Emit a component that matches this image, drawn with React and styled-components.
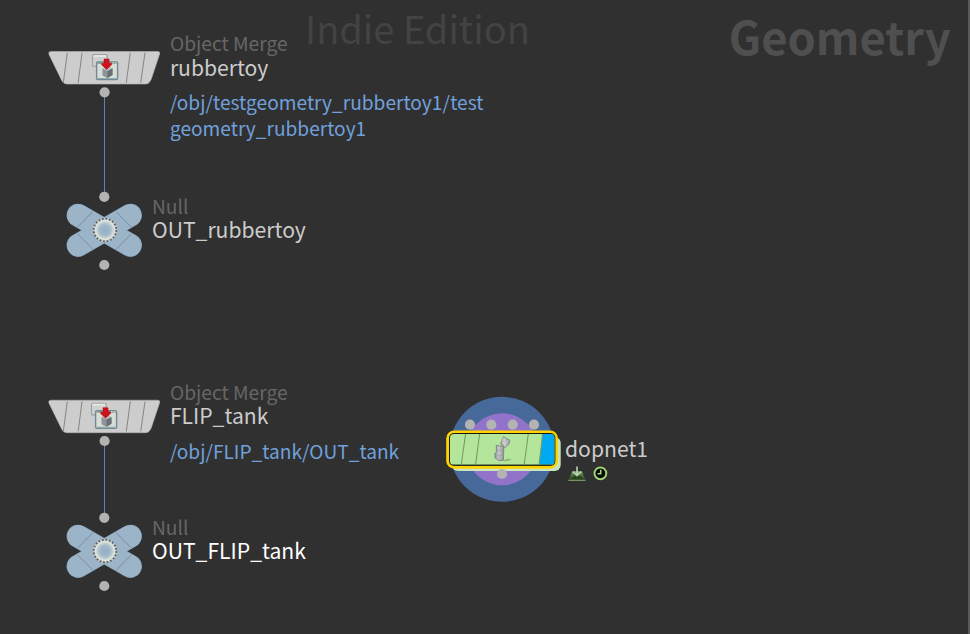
import React from 'react';
import styled, { createGlobalStyle } from 'styled-components';

const GlobalStyle = createGlobalStyle`
  body {
    margin: 0;
    background: #303030;
    font-family: "Noto Sans CJK SC", "Noto Sans", sans-serif;
  }
`;

const Canvas = styled.main`
  position: relative;
  box-sizing: border-box;
  width: 970px;
  height: 634px;
  overflow: hidden;
  background: #303030;
  border-right: 2px solid #5a5a5a;
`;

const Watermark = styled.div`
  position: absolute;
  left: ${(p) => p.$x}px;
  top: ${(p) => p.$y}px;
  color: ${(p) => p.$color};
  font-size: ${(p) => p.$size}px;
  font-weight: ${(p) => (p.$bold ? 700 : 400)};
  line-height: 50px;
  white-space: nowrap;
`;

const Node = styled.section`
  position: absolute;
  left: ${(p) => p.$x}px;
  top: ${(p) => p.$y}px;
  display: flex;
  align-items: flex-start;
`;

const Glyph = styled.svg`
  display: block;
  flex: none;
  overflow: visible;
`;

const Label = styled.div`
  display: flex;
  flex-direction: column;
  margin-top: ${(p) => p.$top || 0}px;
  margin-left: ${(p) => p.$gap}px;
  white-space: nowrap;
`;

const TypeName = styled.span`
  color: #666;
  font-size: 19.2px;
  line-height: 24px;
`;

const NodeName = styled.span`
  margin: ${(p) => (p.$tight ? '-1px 0 1px' : '0')};
  color: ${(p) => (p.$bright ? '#fff' : '#ccc')};
  font-size: 21.15px;
  line-height: 24px;
`;

const PathText = styled.span`
  margin-top: 10px;
  color: #71a0dc;
  font-size: 19.14px;
  line-height: 26px;
  white-space: pre-line;
`;

const Badges = styled.div`
  display: flex;
  gap: 6.5px;
  margin: 6px 0 0 3px;
`;

const WireSvg = styled.svg`
  position: absolute;
  left: 104px;
  top: ${(p) => p.$y}px;
`;

function Wire({ y, length }) {
  return (
    <WireSvg $y={y} width="1" height={length}>
      <rect width="1" height={length} fill="#5585c4" />
    </WireSvg>
  );
}

function Port({ x, y }) {
  return <circle cx={x} cy={y} r="5.1" fill="#b3b3b3" />;
}

function MergeIcon() {
  return (
    <g>
      <rect x="48.5" y="6.6" width="14.6" height="11.6" rx="1" fill="#cfd1cd" stroke="#999fa3" strokeWidth="1.1" />
      <path d="M49.5 8h12.6" stroke="#e9eae6" strokeWidth="1.8" />
      <rect x="52.6" y="13.9" width="21" height="17.6" rx="1.2" fill="#d6ded6" stroke="#70889a" strokeWidth="1.4" />
      <path d="M53.4 15h19.4" stroke="#83998f" strokeWidth="1.8" />
      <path d="M68 15h1.5m1.3 0h1.5" stroke="#d5e5d2" strokeWidth="1" />
      <path d="M54 30.5h18.500" stroke="#8eaca5" strokeWidth="1" />
      <path d="M58.500 20.500l5-2.200 5 2.200v6.500l-5.200 3-4.800-2.500z" fill="#8d9497" />
      <path d="M58.500 20.500l5-2.200 5 2.200-5 2.400z" fill="#bbc2c2" />
      <path d="M63.500 22.900l5-2.400v6.500l-5 3z" fill="#686f73" />
      <path d="M60 11h5l.3 4.400 2.500-.1-.2 1.400-5 4.800-5-4.800.1-1.300 2.300.1z" fill="#cc151b" stroke="#b30b14" strokeWidth=".5" />
    </g>
  );
}

function MergeGlyph({ shift = 0, iconX = 0 }) {
  return (
    <Glyph width="116" height="50" viewBox="0 0 116 50">
      <g transform={`translate(0 ${shift})`}>
        <path
          d="M7 3.500H113.800q2.500 0 1.800 2.600L107.300 31q-2 5-5.300 5H22.800q-3.300 0-5.200-3.800L5 6.500Q4 3.500 7 3.500z"
          fill="#cdcdcd"
          stroke="#b5b5b5"
          strokeWidth=".6"
        />
        <path d="M23.300 4.800l-4 30M38 4.800l-3.800 30M86.300 4.800l-4 30M101 4.800l-4.300 30" stroke="#858585" strokeWidth="1" />
        <g transform={`translate(${iconX} 0)`}>
          <MergeIcon />
        </g>
        <Port x={60.6} y={44.3} />
      </g>
    </Glyph>
  );
}

function NullGlyph() {
  return (
    <Glyph width="80" height="82" viewBox="0 0 80 82">
      <defs>
        <radialGradient id="hub">
          <stop offset="0" stopColor="#94aec5" />
          <stop offset=".48" stopColor="#a0b8ca" />
          <stop offset=".72" stopColor="#c5d1d3" />
          <stop offset=".85" stopColor="#e2e5dc" />
          <stop offset="1" stopColor="#cfd5d0" />
        </radialGradient>
      </defs>
      <g strokeLinecap="round">
        <path d="M14.200 25.300l52.100 30M66.300 25.300L14.200 55.300" stroke="#86a3bc" strokeWidth="23.200" />
        <path d="M14.200 25.300l52.100 30M66.300 25.300L14.200 55.300" stroke="#9cb4c8" strokeWidth="22" />
      </g>
      <path d="M28.700 21.700l-15 15.300M52 21.700l15 15M13.700 44l15 15M67.300 44L51.700 59.700" stroke="#70889c" strokeWidth=".9" />
      <circle cx="41" cy="40" r="11" fill="url(#hub)" />
      <circle cx="41" cy="40" r="11.200" fill="none" stroke="#c9cfc9" strokeWidth="1.500" />
      <circle cx="41" cy="40" r="11.300" fill="none" stroke="#5b6165" strokeWidth="1.800" strokeDasharray="1.850 1.700" />
      <Port x={40.3} y={6.8} />
      <Port x={40.3} y={75} />
    </Glyph>
  );
}

function DopGlyph() {
  return (
    <Glyph width="118" height="110" viewBox="444 395 118 110">
      <defs>
        <linearGradient id="metal" x1="0" x2="1">
          <stop offset="0" stopColor="#8f9394" />
          <stop offset=".45" stopColor="#c9cccd" />
          <stop offset="1" stopColor="#8c9092" />
        </linearGradient>
      </defs>
      <circle cx="502" cy="449.300" r="52.500" fill="#466999" />
      <circle cx="502" cy="449.300" r="36" fill="#9273ca" />
      <rect x="452" y="437" width="108.700" height="34" rx="6" fill="#cdeec1" opacity=".95" />
      <Port x={470} y={424.7} />
      <Port x={491.3} y={424.7} />
      <Port x={512.7} y={424.7} />
      <Port x={534} y={424.7} />
      <rect x="446.200" y="430.400" width="111.800" height="38.300" rx="8" fill="#ffd200" />
      <rect x="449" y="433" width="106.400" height="33" rx="5" fill="#17190c" />
      <rect x="450" y="434" width="104.400" height="31" rx="4" fill="#b3e59a" />
      <path d="M542.800 434H550.500q3.900 0 3.900 3.900V461q0 4-3.900 4H539.200z" fill="#00aaf0" />
      <path d="M452 464.800h100" stroke="#536b42" strokeWidth="1" />
      <path d="M465.600 434l-4.300 30.500M479.600 434l-4 30.500M528.300 434l-4.100 30.500M542.600 434l-3.500 30.500" stroke="#739760" strokeWidth="1" />
      <path d="M501 460.800l8-2.300 2.500 1.300-5.500 1.500z" fill="#779767" opacity=".65" />
      <g strokeLinejoin="round">
        <path d="M503.500 436.800l6.300 3.400-.9 4-4 3.400-4.400-3.700z" fill="url(#metal)" stroke="#858b8c" strokeWidth=".9" />
        <path d="M503.700 438.200l-1.500 4.700 3.200 1.500 3.200-3.800" fill="none" stroke="#d2d5d6" strokeWidth=".8" />
        <path d="M496.300 445.300l4.700 1 2.800-.3-.4 13.900-4.200.9-4.200-3-.1-4.500 1.500-1z" fill="url(#metal)" stroke="#7d8384" strokeWidth=".9" />
        <path d="M496.800 449.500l3.500 1 3-.6M495.800 454.300l3.500 1.300 4-.8M499.300 456v4" fill="none" stroke="#969c9e" strokeWidth=".7" />
      </g>
      <Port x={502} y={474} />
    </Glyph>
  );
}

function TerrainBadge() {
  return (
    <Glyph width="18" height="16" viewBox="0 0 18 16">
      <defs>
        <linearGradient id="terrain" x1="0" y1="0" x2="0" y2="1">
          <stop offset="0" stopColor="#8caf78" />
          <stop offset=".5" stopColor="#47683a" />
          <stop offset="1" stopColor="#28431d" />
        </linearGradient>
      </defs>
      <path d="M.5 14.300L4.300 5.300h9.700l3.500 9z" fill="url(#terrain)" />
      <path d="M2.500 13.500L6.500 9.500l2.500 2.300 3-2L15.500 13.500z" fill="#26401a" />
      <path d="M.3 14.300h17.400" stroke="#94b582" strokeWidth=".9" />
      <path d="M9 .5v8" fill="none" stroke="#c5dcb8" strokeWidth="1.500" />
      <path d="M5 5.800L9 9.300 13 5.800" fill="none" stroke="#c5dcb8" strokeWidth="1.400" />
    </Glyph>
  );
}

function ClockBadge() {
  return (
    <Glyph width="15" height="16" viewBox="0 0 15 16">
      <circle cx="7.400" cy="7.300" r="5.900" fill="#050704" stroke="#9dd276" strokeWidth="2" />
      <path d="M7.700 3.800v3.900H4.600" fill="none" stroke="#a9dd84" strokeWidth="1.500" />
    </Glyph>
  );
}

function ObjectMergeNode({ x, y, name, path, shift, iconX, tight }) {
  return (
    <Node $x={x} $y={y}>
      <MergeGlyph shift={shift} iconX={iconX} />
      <Label $gap={9.9} $top={-17}>
        <TypeName>Object Merge</TypeName>
        <NodeName $tight={tight}>{name}</NodeName>
        <PathText>{path}</PathText>
      </Label>
    </Node>
  );
}

function NullNode({ x, y, name, bright }) {
  return (
    <Node $x={x} $y={y}>
      <NullGlyph />
      <Label $gap={8} $top={3.6}>
        <TypeName>Null</TypeName>
        <NodeName $tight $bright={bright}>{name}</NodeName>
      </Label>
    </Node>
  );
}

export default function App() {
  return (
    <>
      <GlobalStyle />
      <Canvas>
        <Watermark $x={305} $y={3} $size={38} $color="#434343">Indie Edition</Watermark>
        <Watermark $x={728.7} $y={10} $size={45.3} $color="#4f4f4f" $bold>Geometry</Watermark>

        <Wire y={92} length={104} />
        <Wire y={441} length={77} />

        <ObjectMergeNode x={44} y={48} name="rubbertoy" path={'/obj/testgeometry_rubbertoy1/test\ngeometry_rubbertoy1'} />
        <NullNode x={64} y={190} name="OUT_rubbertoy" />
        <ObjectMergeNode x={44} y={397} name="FLIP_tank" path="/obj/FLIP_tank/OUT_tank" shift={-0.3} iconX={-1} tight />
        <NullNode x={64} y={511} name="OUT_FLIP_tank" bright />

        <Node $x={444} $y={395}>
          <DopGlyph />
          <Label $gap={3} $top={40.5}>
            <NodeName>dopnet1</NodeName>
            <Badges>
              <TerrainBadge />
              <ClockBadge />
            </Badges>
          </Label>
        </Node>
      </Canvas>
    </>
  );
}
